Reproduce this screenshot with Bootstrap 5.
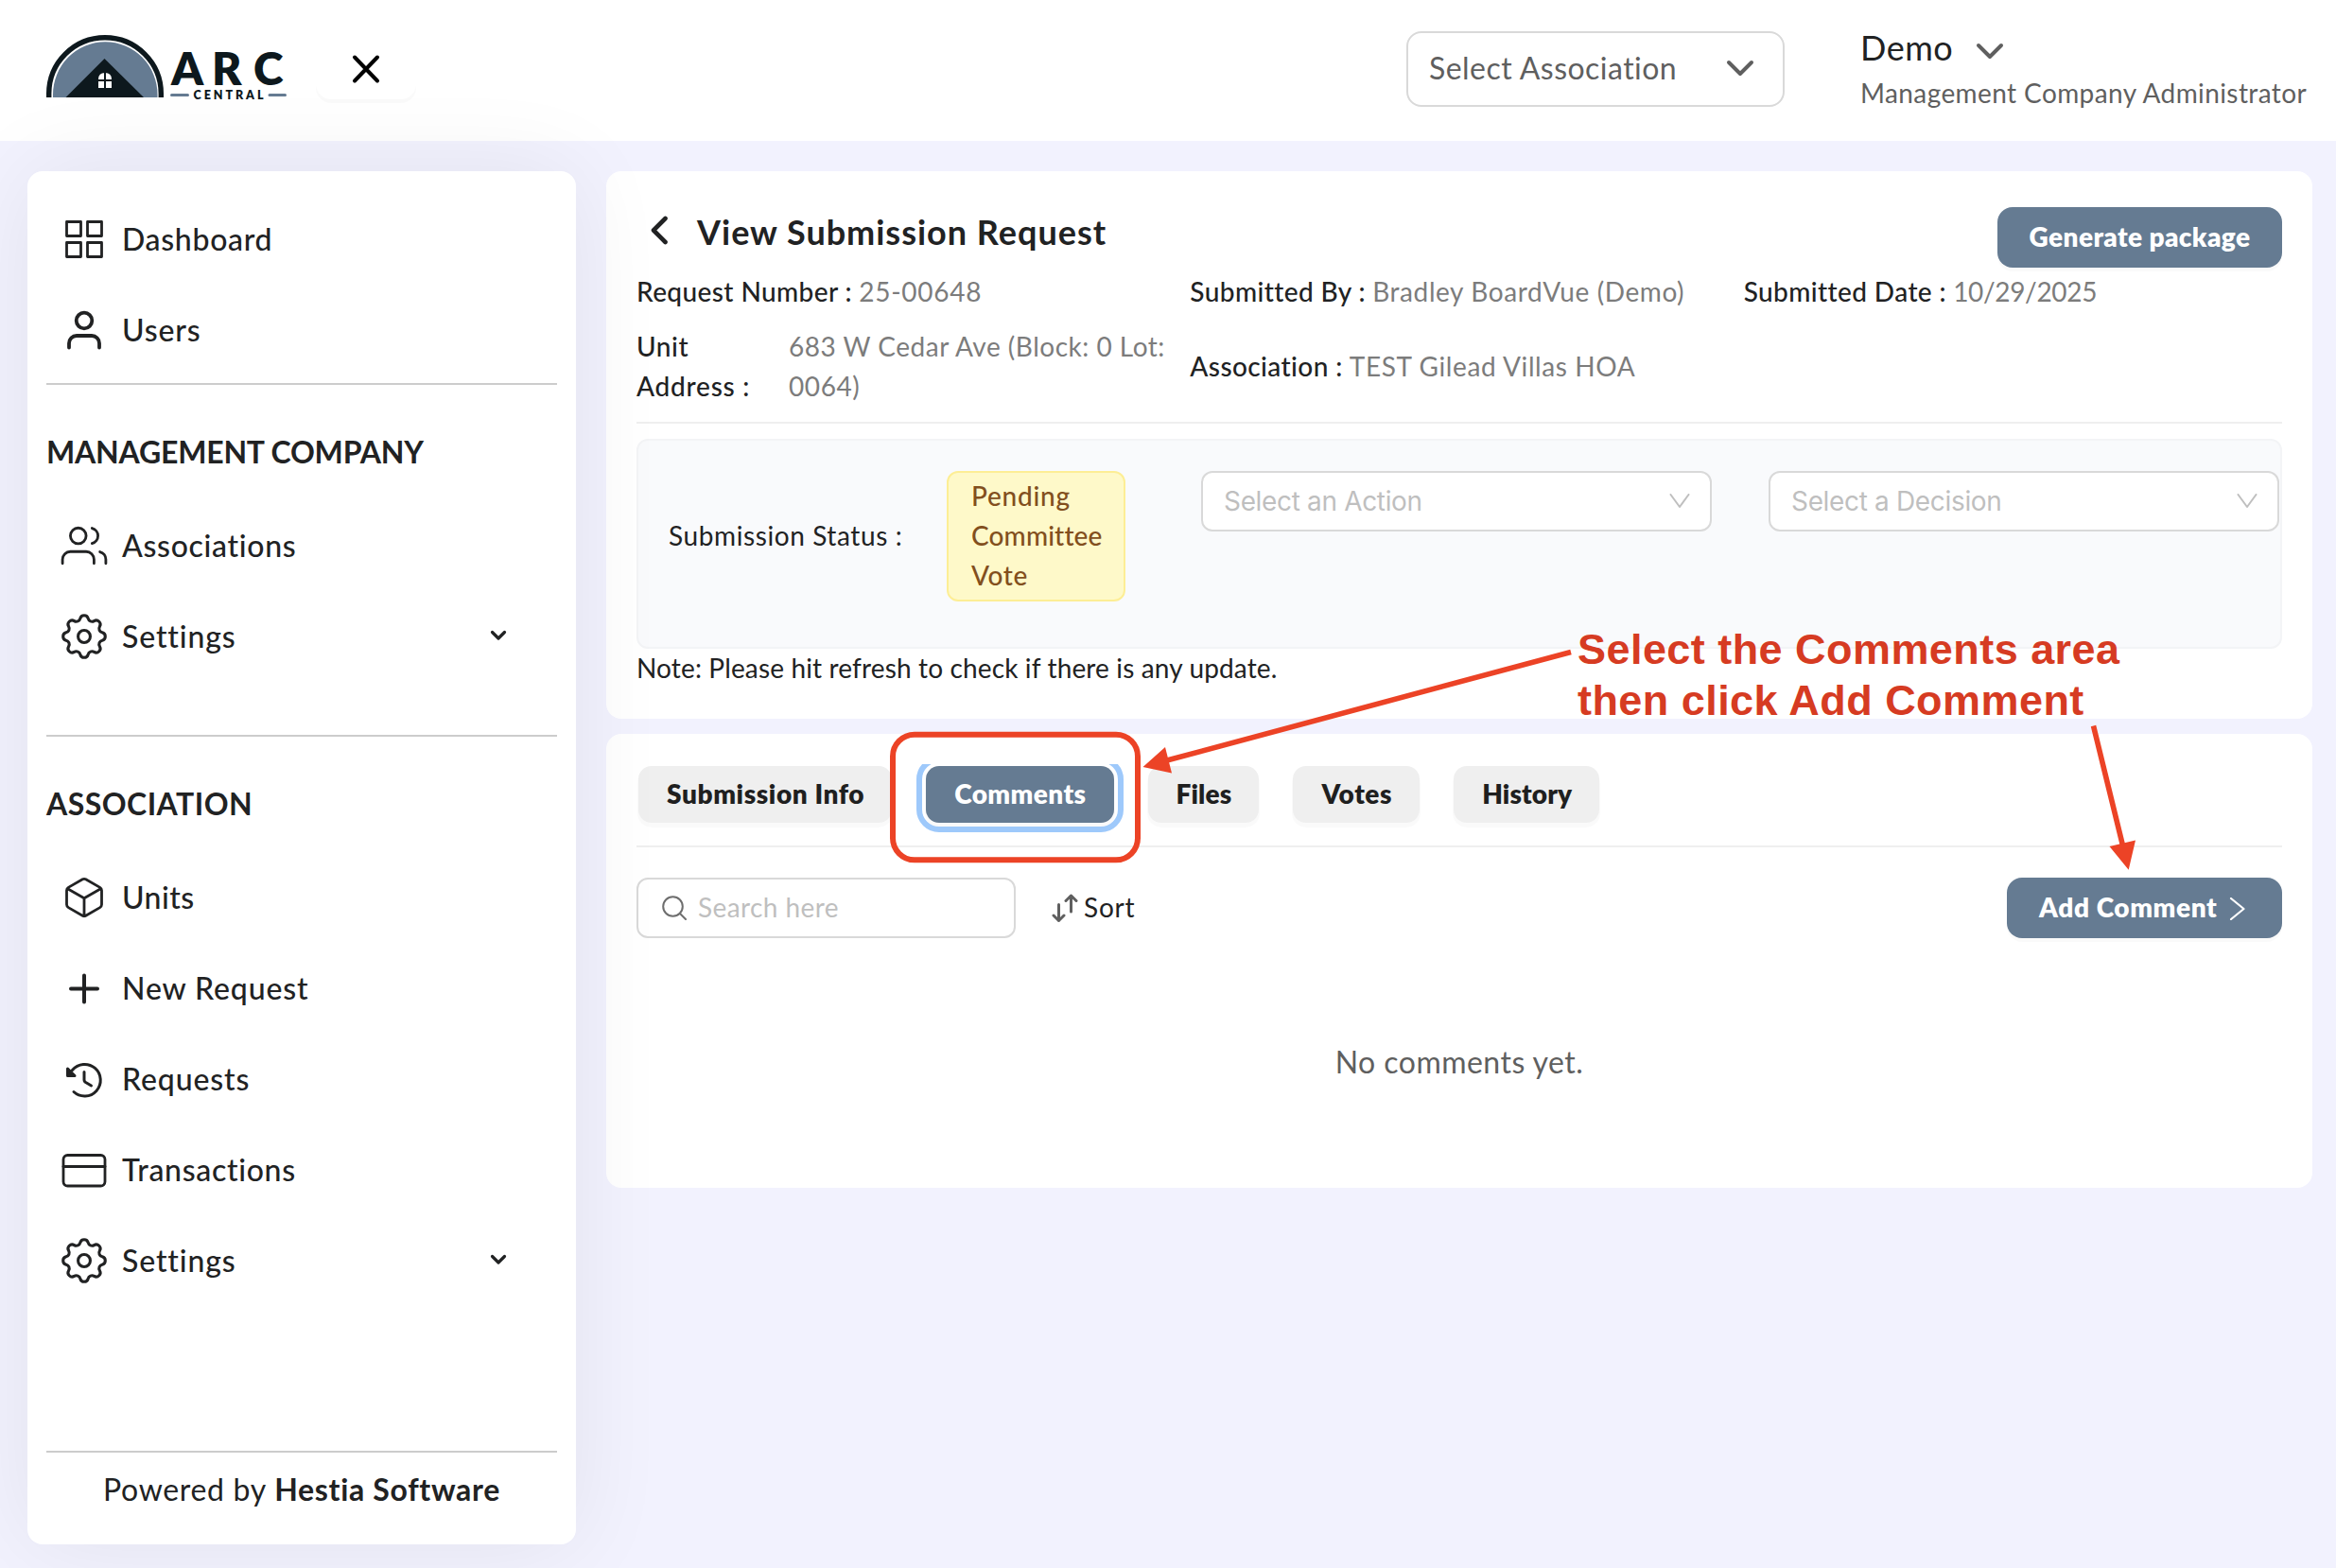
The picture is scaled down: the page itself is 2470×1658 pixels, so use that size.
<!DOCTYPE html>
<html lang="en">
<head>
<meta charset="utf-8">
<title>ARC Central - View Submission Request</title>
<link href="https://cdn.jsdelivr.net/npm/bootstrap@5.3.0/dist/css/bootstrap.min.css" rel="stylesheet">
<style>
:root{--slate:#657b92;--ink:#212223;--muted:#5f5f5f;--value:#7c7c7c;--line:#efefef}
body{width:2470px;height:1658px;overflow:hidden;position:relative;background:#f2f2fe;color:var(--ink);font-family:Lato,"Open Sans",sans-serif;font-size:28px;line-height:42px}
svg{flex:none;display:block;fill:none;stroke:currentColor;stroke-linecap:round;stroke-linejoin:round}
.t{white-space:nowrap;letter-spacing:.0215em}
.t.s-neg{letter-spacing:-.012em}
.t.s-0{letter-spacing:-.006em}
.t.s-1{letter-spacing:.0145em}
.t.s-3{letter-spacing:.0275em}
.t.s-note{letter-spacing:.005em}
.top-bar{height:149px;padding:0 33px 0 49px}
.brand-logo{margin-bottom:7px}
.brand-word{font-weight:800;fill:#0d181d;stroke:none}
.close-btn{width:106px;height:64px;border-radius:16px;margin:0 0 3px 31px;box-shadow:0 4px 0 rgba(0,0,0,.02);background:#fff;border:0;padding:0}
.assoc-select{width:400px;height:80px;border:2px solid #d9d9d9;border-radius:16px;padding:0 30px 3px 22px;font-size:32px;color:var(--muted);margin:0 1px 3px auto}
.user-box{width:470px;margin-left:79px;color:var(--muted);height:97px}
.user-name{font-size:36px;line-height:46px;height:51px;padding-bottom:4px;gap:24px;color:var(--ink)}
.page-body{padding:32px 25px 25px 29px;gap:32px;height:1509px}
.side-nav{width:580px;flex:none;height:1452px;border-radius:16px;background:#fff;padding:24px 20px;box-shadow:0 0 100px rgba(0,0,0,.07);z-index:2;font-size:32px;font-weight:500;position:relative}
.side-link{height:96px;padding:0 54px 0 12px;color:var(--ink);text-decoration:none;gap:12px}
.side-link .t{padding-bottom:1px}
.side-rule{height:2px;background:#ccc;flex:none}
.side-title{font-weight:700;line-height:48px;margin-top:47px;margin-bottom:27px}
.side-foot{line-height:48px;margin-top:15px}
.panel-box{background:#fff;border-radius:16px;padding:0 32px}
.panel-request{height:579px;padding-top:38px}
.panel-comments{height:480px;padding-top:32px}
.btn-slate{height:64px;background:var(--slate);color:#fff;border:0;border-radius:16px;font-size:28px;font-weight:800;line-height:42px;padding:0 38px 3px 34px;box-shadow:0 4px 0 rgba(0,0,0,.02)}
.page-title{font-size:36px;font-weight:700;line-height:53px;margin:0}
.info-row{--bs-gutter-x:16px;--bs-gutter-y:16px;color:var(--value);padding-top:1px}
.info-row b{font-weight:500;color:var(--ink)}
.thin-rule{height:2px;background:var(--line)}
.status-box{height:222px;margin-top:16px;border:2px solid #f3f4f6;border-radius:12px;background:#f9fafc;padding:32px 1px 0 32px}
.status-tag{width:189px;height:138px;background:#fef9c9;border:2px solid #fdee95;border-radius:12px;color:#824f1d;padding:3px 0 0 24px;font-weight:500;margin-right:80px}
.pick-box{width:540px;height:64px;border:2px solid #d9d9d9;border-radius:12px;background:#fff;color:#bfbfbf;font-family:Inter,sans-serif;padding:0 21px 0 22px}
.tab-strip{margin:0 -2px;padding:2px 4px 12px;gap:36px;overflow:hidden;width:1100px}
.tab-btn{height:60px;border-radius:14px;border:0;background:#efefef;color:#1f1f1f;font-weight:800;padding:0 29px 3px 30px;box-shadow:0 4px 0 1px rgba(0,0,0,.02);display:flex;align-items:center}
.tab-btn.on{background:var(--slate);color:#fff;outline:6px solid #9ec9fb;outline-offset:4px}
.find-box{width:401px;height:64px;border:2px solid #d9d9d9;border-radius:12px;color:#bfbfbf;padding:0 25px;gap:12px}
.sort-box{margin-left:38px;gap:6px}
.find-box .t,.sort-box .t{padding-bottom:3px}
.empty-note{margin-top:107px;font-size:32px;line-height:48px;color:var(--muted)}
.anno-layer{position:absolute;left:0;top:0;z-index:5;pointer-events:none;color:#ec4326}
.anno-text{position:absolute;left:1668px;top:660px;z-index:6;font:bold 45px/54px "Liberation Sans",sans-serif;color:#d63b22}
.anno-text .t{letter-spacing:.01em}
</style>
</head>
<body>
<header class="top-bar bg-white d-flex align-items-center">
  <svg class="brand-logo" width="254" height="72" viewBox="49 35 254 72">
    <path d="M51.7 103V99a59.3 59.3 0 0 1 118.600 0v4" stroke="#0d181d" stroke-width="5.400" stroke-linecap="butt"/>
    <path d="M56 103v-3a55 55.500 0 0 1 110.500 0v3z" fill="#657b92" stroke="none"/>
    <path d="M69.500 103 110.500 62l41.500 41z" fill="#0d181d" stroke="none"/>
    <path d="M104 93v-9q0-7 7-7t7 7v9z" fill="#fff" stroke="none"/>
    <path d="M111 76v18M103 85h16" stroke="#0d181d" stroke-width="2" stroke-linecap="butt"/>
    <text class="brand-word" x="181 224 268" y="89.500" font-size="48">ARC</text>
    <text class="brand-word" x="204.500" y="104.500" font-size="12.500" textLength="74" lengthAdjust="spacing">CENTRAL</text>
    <path d="M181.500 100.500h17M285 100.500h16.500" stroke="#657b92" stroke-width="3"/>
  </svg>
  <button class="close-btn d-flex align-items-center justify-content-center"><svg width="32" height="32" viewBox="0 0 32 32" stroke-width="4"><path d="M4 3.500l24 25M28 3.500 4 28.500"/></svg></button>
  <div class="assoc-select d-flex align-items-center justify-content-between">
    <span class="t s-1">Select Association</span>
    <svg width="30" height="18" viewBox="0 0 30 18" stroke-width="4"><path d="M3 3l12 12L27 3"/></svg>
  </div>
  <div class="user-box">
    <div class="user-name d-flex align-items-center"><span class="t s-1">Demo</span><svg class="mt-2" width="30" height="18" viewBox="0 0 30 18" stroke-width="4" color="#5f5f5f"><path d="M3 3l12 12L27 3"/></svg></div>
    <div><span class="t s-1">Management Company Administrator</span></div>
  </div>
</header>

<div class="page-body d-flex align-items-start">
  <nav class="side-nav d-flex flex-column">
    <a class="side-link d-flex align-items-center"><svg width="56" height="56" viewBox="61 225 56 56" stroke-width="2.800" stroke-linejoin="miter"><path d="M70.500 234.500h15v15h-15zM92.500 234.500h15v15h-15zM70.500 256.500h15v15h-15zM92.500 256.500h15v15h-15z"/></svg><span class="t">Dashboard</span></a>
    <a class="side-link d-flex align-items-center"><svg width="56" height="56" viewBox="61 321 56 56" stroke-width="3.800"><circle cx="89" cy="339" r="8.300"/><path d="M73 367.500v-4.500a8 8 0 0 1 8-8h16a8 8 0 0 1 8 8v4.500"/></svg><span class="t s-3">Users</span></a>
    <div class="side-rule mt-2"></div>
    <div class="side-title"><span class="t s-0">MANAGEMENT COMPANY</span></div>
    <a class="side-link d-flex align-items-center"><svg width="56" height="56" viewBox="-1.450 -1.450 26.900 26.900" stroke-width="1.350"><path d="M17 21v-2a4 4 0 0 0-4-4H5a4 4 0 0 0-4 4v2"/><circle cx="9" cy="7" r="4"/><path d="M23 21v-2a4 4 0 0 0-3-3.870M16 3.130a4 4 0 0 1 0 7.750"/></svg><span class="t">Associations</span></a>
    <a class="side-link d-flex align-items-center"><svg width="56" height="56" viewBox="0.700 0.700 22.600 22.600" stroke-width="1.250"><path d="M10.325 4.317c.426-1.756 2.924-1.756 3.350 0a1.724 1.724 0 0 0 2.573 1.066c1.543-.940 3.310.826 2.370 2.370a1.724 1.724 0 0 0 1.065 2.572c1.756.426 1.756 2.924 0 3.350a1.724 1.724 0 0 0-1.066 2.573c.940 1.543-.826 3.310-2.370 2.370a1.724 1.724 0 0 0-2.572 1.065c-.426 1.756-2.924 1.756-3.350 0a1.724 1.724 0 0 0-2.573-1.066c-1.543.940-3.310-.826-2.370-2.370a1.724 1.724 0 0 0-1.065-2.572c-1.756-.426-1.756-2.924 0-3.350a1.724 1.724 0 0 0 1.066-2.573c-.940-1.543.826-3.310 2.370-2.370 1 .608 2.296.070 2.572-1.065z"/><circle cx="12" cy="12" r="2.600"/></svg><span class="t s-3">Settings</span><svg class="ms-auto" width="16" height="12" viewBox="0 0 16 12" stroke-width="3.200" overflow="visible"><path d="M1.500 1.500 8 8 14.500 1.500"/></svg></a>
    <div class="side-rule" style="margin-top:56px"></div>
    <div class="side-title"><span class="t s-1">ASSOCIATION</span></div>
    <a class="side-link d-flex align-items-center"><svg width="56" height="56" viewBox="61 921.500 56 56" stroke-width="2.800"><path d="M87.300 930.300a3.500 3.500 0 0 1 3.400 0l15 8.600a3.500 3.500 0 0 1 1.800 3v15.200a3.500 3.500 0 0 1-1.800 3l-15 8.600a3.500 3.500 0 0 1-3.400 0l-15-8.600a3.500 3.500 0 0 1-1.800-3v-15.200a3.500 3.500 0 0 1 1.800-3zM71.500 940.300 89 950.300l17.500-10M89 950.300v19"/></svg><span class="t s-1">Units</span></a>
    <a class="side-link d-flex align-items-center"><svg width="56" height="56" viewBox="61 1017 56 56" stroke-width="4"><path d="M89 1031.500v28M75 1045.500h28"/></svg><span class="t s-3">New Request</span></a>
    <a class="side-link d-flex align-items-center"><svg width="56" height="56" viewBox="61 1113 56 56" stroke-width="3"><path d="M78 1154.500a16.800 16.800 0 1 0-1.500-23"/><path d="M89 1133.500v8.500q0 1.500 1.200 2.300l6.300 3.700"/><path d="M71.500 1130v7.500h7.500z" fill="currentColor"/></svg><span class="t s-3">Requests</span></a>
    <a class="side-link d-flex align-items-center"><svg width="56" height="56" viewBox="61 1209 56 56" stroke-width="2.800"><rect x="67" y="1221.500" width="44" height="32.500" rx="4.500"/><path d="M67 1233.500h44"/></svg><span class="t">Transactions</span></a>
    <a class="side-link d-flex align-items-center"><svg width="56" height="56" viewBox="0.700 0.700 22.600 22.600" stroke-width="1.250"><path d="M10.325 4.317c.426-1.756 2.924-1.756 3.350 0a1.724 1.724 0 0 0 2.573 1.066c1.543-.940 3.310.826 2.370 2.370a1.724 1.724 0 0 0 1.065 2.572c1.756.426 1.756 2.924 0 3.350a1.724 1.724 0 0 0-1.066 2.573c.940 1.543-.826 3.310-2.370 2.370a1.724 1.724 0 0 0-2.572 1.065c-.426 1.756-2.924 1.756-3.350 0a1.724 1.724 0 0 0-2.573-1.066c-1.543.940-3.310-.826-2.370-2.370a1.724 1.724 0 0 0-1.065-2.572c-1.756-.426-1.756-2.924 0-3.350a1.724 1.724 0 0 0 1.066-2.573c-.940-1.543.826-3.310 2.370-2.370 1 .608 2.296.070 2.572-1.065z"/><circle cx="12" cy="12" r="2.600"/></svg><span class="t s-3">Settings</span><svg class="ms-auto" width="16" height="12" viewBox="0 0 16 12" stroke-width="3.200" overflow="visible"><path d="M1.500 1.500 8 8 14.500 1.500"/></svg></a>
    <div class="side-rule" style="margin-top:153px"></div>
    <div class="side-foot text-center fw-normal"><span class="t">Powered by</span> <strong class="t">Hestia Software</strong></div>
  </nav>

  <main class="d-flex flex-column flex-grow-1 gap-3">
    <section class="panel-box panel-request">
      <div class="d-flex align-items-start justify-content-between">
        <div class="d-flex align-items-center"><svg width="64" height="44" viewBox="673 223 64 44" stroke-width="4.600"><path d="M703.500 230 691 242.500l12.500 12.500"/></svg><h1 class="page-title"><span class="t s-3">View Submission Request</span></h1></div>
        <button class="btn-slate px-0" style="width:301px"><span class="t s-1">Generate package</span></button>
      </div>
      <div class="row info-row" style="margin-top:-13px">
        <div class="col-4"><b class="t s-1">Request Number :</b> <span class="t s-3">25-00648</span></div>
        <div class="col-4"><b class="t s-1">Submitted By :</b> <span class="t">Bradley BoardVue (Demo)</span></div>
        <div class="col-4"><b class="t s-1">Submitted Date :</b> <span class="t s-neg">10/29/2025</span></div>
        <div class="col-4 d-flex"><b style="width:161px"><span class="t">Unit</span><br><span class="t s-3">Address :</span></b><span><span class="t" style="letter-spacing:.018em">683 W Cedar Ave (Block: 0 Lot:</span><br><span class="t">0064)</span></span></div>
        <div class="col-4 d-flex align-items-center"><div><b class="t s-1">Association :</b> <span class="t">TEST Gilead Villas HOA</span></div></div>
      </div>
      <div class="thin-rule" style="margin-top:17px"></div>
      <div class="status-box d-flex align-items-start">
        <span style="margin-top:47px;width:294px"><span class="t">Submission Status :</span></span>
        <div class="status-tag"><span class="t s-3">Pending</span><br><span class="t s-note">Committee</span><br><span class="t">Vote</span></div>
        <div class="pick-box d-flex align-items-center justify-content-between"><span class="t s-neg">Select an Action</span><svg width="22" height="16" viewBox="0 0 22 16" stroke-width="2" stroke-linecap="butt" stroke-linejoin="miter"><path d="M1.500 1 11 14 20.500 1"/></svg></div>
        <div class="pick-box d-flex align-items-center justify-content-between ms-auto"><span class="t s-neg">Select a Decision</span><svg width="22" height="16" viewBox="0 0 22 16" stroke-width="2" stroke-linecap="butt" stroke-linejoin="miter"><path d="M1.500 1 11 14 20.500 1"/></svg></div>
      </div>
      <div style="line-height:40px"><span class="t s-note">Note: Please hit refresh to check if there is any update.</span></div>
    </section>

    <section class="panel-box panel-comments">
      <div class="tab-strip d-flex">
        <button class="tab-btn"><span class="t">Submission Info</span></button>
        <button class="tab-btn on"><span class="t s-1">Comments</span></button>
        <button class="tab-btn"><span class="t s-note">Files</span></button>
        <button class="tab-btn"><span class="t">Votes</span></button>
        <button class="tab-btn"><span class="t s-note">History</span></button>
      </div>
      <div class="thin-rule" style="margin-top:12px"></div>
      <div class="d-flex align-items-center" style="margin-top:32px">
        <div class="find-box d-flex align-items-center"><svg width="26" height="26" viewBox="0 0 26 26" stroke-width="2" color="#6e6e6e"><circle cx="11.500" cy="11.500" r="10.300"/><path d="M19 19l6 6"/></svg><span class="t s-1">Search here</span></div>
        <div class="sort-box d-flex align-items-center"><svg width="28" height="32" viewBox="1112 943 28 32" stroke-width="3" color="#5f5f5f"><path d="M1119.500 955.500v17M1114 967l5.500 5.500 5.500-5.500M1132.500 963v-17M1127 951.500l5.500-5.500 5.500 5.500"/></svg><span class="t s-3">Sort</span></div>
        <button class="btn-slate ms-auto d-flex align-items-center justify-content-between" style="width:291px"><span class="t">Add Comment</span><svg class="mt-1" width="18" height="24" viewBox="0 0 18 24" stroke-width="2.200" stroke-linejoin="miter"><path d="M2 1 15.500 12 2 23"/></svg></button>
      </div>
      <div class="empty-note text-center"><span class="t s-1">No comments yet.</span></div>
    </section>
  </main>
</div>

<!-- Callout drawn over the page: highlight box, arrows and caption -->
<svg class="anno-layer" width="2470" height="1658" viewBox="0 0 2470 1658">
  <rect x="944" y="776.700" width="259" height="132.600" rx="23" stroke-width="6"/>
  <path d="M1661 689.500 1232 804.500M2213.500 767.500 2245 896" stroke-width="5.600" stroke-linecap="butt"/>
  <path d="M1208.500 811 1232 790l7 27.500zM2250.700 919.700 2230.500 895l27.500-6.500z" fill="currentColor" stroke="none"/>
</svg>
<div class="anno-text"><span class="t">Select the Comments area</span><br><span class="t">then click Add Comment</span></div>
<script src="https://cdn.jsdelivr.net/npm/bootstrap@5.3.0/dist/js/bootstrap.bundle.min.js"></script>
</body>
</html>
